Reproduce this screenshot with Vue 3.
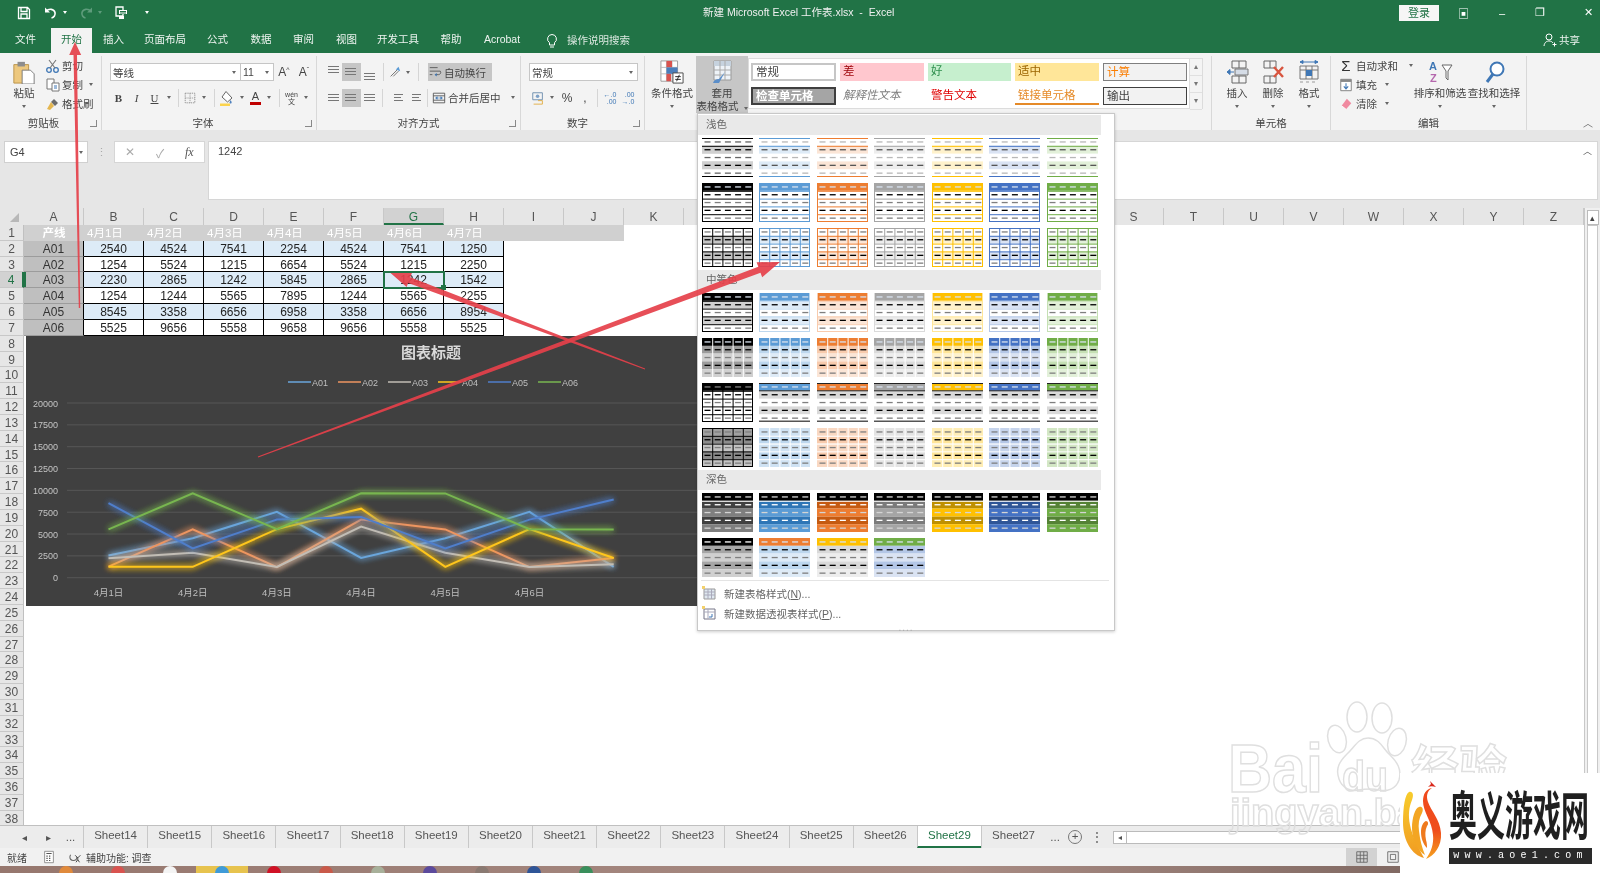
<script setup>
const ic = {
  save: '<path d="M2.5 2.5h9l2 2v9h-11z M5 2.5v4h6v-4 M5 13.5v-4.500h6v4.500" fill="none" stroke="#fff" stroke-width="1.300"/>',
  undo: '<path d="M3 6.500c3-3.500 8-2.500 9 1 .6 2.500-1 5-3.500 5.500" fill="none" stroke="#fff" stroke-width="1.600"/><path d="M2 2.500v5h5z" fill="#fff"/>',
  redo: '<path d="M13 6.500c-3-3.500-8-2.500-9 1-.6 2.500 1 5 3.500 5.500" fill="none" stroke="#5f9c7c" stroke-width="1.600"/><path d="M14 2.500v5h-5z" fill="#5f9c7c"/>',
  touch: '<path d="M3 2h7v9H3z" fill="none" stroke="#fff" stroke-width="1.300"/><path d="M6 5h8v4H6zM6 11h5v3H6z" fill="#fff"/><path d="M7 6.500h6M7 8h6" stroke="#217346"/>',
  bulb: '<path d="M8 1.500a4.500 4.500 0 0 0-2.500 8.200V12h5V9.700A4.500 4.500 0 0 0 8 1.500zM6 14h4" fill="none" stroke="#fff" stroke-width="1"/>',
  user: '<circle cx="7" cy="5" r="3" fill="none" stroke="#fff"/><path d="M2 14c.5-4 3-5 5-5s3 .7 4 2M12.500 10.500v4M10.500 12.500h4" fill="none" stroke="#fff"/>',
  paste: '<path d="M2 5h16v20H2z" fill="#edc87e" stroke="#b99146"/><path d="M6 2h8v5H6z" fill="#8d8d8d"/><path d="M11 11h9l4 4v11H11z" fill="#fff" stroke="#777"/>',
  cut: '<circle cx="4" cy="12" r="2.300" fill="none" stroke="#3f77b5" stroke-width="1.300"/><circle cx="11" cy="12" r="2.300" fill="none" stroke="#3f77b5" stroke-width="1.300"/><path d="M5 10 11 2M10 10 4 2" stroke="#777" stroke-width="1.100"/>',
  copy: '<path d="M2 2h7v10H2z" fill="#fff" stroke="#777"/><path d="M7 6h7v8H7z" fill="#fff" stroke="#777"/><path d="M9 9h3M9 11h3" stroke="#3f77b5"/>',
  brush: '<path d="M9 3l4 4-3 3-4-4z" fill="#6b6b6b"/><path d="M6 6l3 4-4 4-3-1z" fill="#e4b64f"/>',
  border: '<path d="M2.500 2.500h11v11h-11z" fill="none" stroke="#888" stroke-dasharray="1.500 1"/><path d="M8 2.500v11M2.500 8h11" stroke="#999" stroke-dasharray="1.500 1"/>',
  fill: '<path d="M7 1.500 13 8l-4.500 4L3 7z" fill="#fff" stroke="#666"/><path d="M11.500 10c1 1.500 1.500 2 1 3s-2 .6-2-.5z" fill="#4f81bd"/><path d="M1 13.500h10V16H1z" fill="#fbd34d"/>',
  orient: '<path d="M3 13 12 4M6 13 12 7" stroke="#666"/><path d="M12 2l2 5-5-2z" fill="#5b9bd5"/>',
  wrap: '<path d="M2 3h9M2 7h12c1.500 1.500 0 4-2 4H8M2 11h3" fill="none" stroke="#555"/><path d="M10 9l-2.500 2 2.500 2z" fill="#3f77b5"/>',
  merge: '<path d="M1.500 2.500h13v11h-13zM1.500 5.500h13M1.500 10.500h13" fill="none" stroke="#555"/><path d="M5 8h6M4 8l2-1.500v3zM12 8l-2-1.500v3z" fill="#3f77b5" stroke="#3f77b5" stroke-width=".6"/>',
  acct: '<path d="M2 2h11v8H2z" fill="none" stroke="#6688aa"/><circle cx="7.500" cy="6" r="2" fill="#7ca0c7"/><path d="M8 11h5v4H3" fill="none" stroke="#e0a93a"/>',
  cond: '<path d="M1 1h18v22H1z" fill="#fff" stroke="#999"/><path d="M1 8h18M1 15h18M7 1v22M13 1v22" stroke="#bbb"/><path d="M7 1h6v7H7z" fill="#d9534f"/><path d="M7 8h12v7H7z" fill="#4a7ebb"/><path d="M7 15h5v8H7z" fill="#d9534f"/><path d="M14 14h11v11H14z" fill="#fff" stroke="#444"/><path d="M16.500 18h6M16.500 21h6M21 16l-3 7" stroke="#222"/>',
  table: '<path d="M4 1h17v19H4z" fill="#eef3f8" stroke="#999"/><path d="M4 1h17v5H4z" fill="#c6d2de"/><path d="M4 10h17M4 15h17M10 1v19M15 1v19" stroke="#aaa"/><path d="M15 12 9 23 3 23c1-3 3-4 6-4z" fill="#5b8ec9"/>',
  insert: '<path d="M7 1h14v7H7zM7 16h14v7H7zM14 1v7M14 16v7" fill="none" stroke="#666"/><path d="M10 9h13v6H10z" fill="#d5dce6" stroke="#777"/><path d="M2 12h7M2 12l3-2.500v5z" stroke="#3f77b5" fill="#3f77b5"/>',
  del: '<path d="M3 1h12v7H3zM3 16h12v7H3zM9 1v7M9 16v7" fill="none" stroke="#666"/><path d="M13 7l9 10M22 7l-9 10" stroke="#d8553f" stroke-width="2.400"/>',
  format: '<path d="M3 6h18v13H3zM9 6v13M15 6v13M3 10h18" fill="none" stroke="#777"/><path d="M9 10h6v6H9z" fill="#3f77b5"/><path d="M3 2h18M3 2l3-1.500v3zM21 2l-3-1.500v3z" stroke="#3f77b5" fill="#3f77b5"/><path d="M3 22h3M9 22h3M15 22h3" stroke="#999"/>',
  fillDown: '<path d="M2 1.500h12v13H2z" fill="#fff" stroke="#777"/><path d="M2 1.500h12v3H2z" fill="#888"/><path d="M8 6v6M5.500 9.500 8 12.500l2.500-3" fill="none" stroke="#3f77b5" stroke-width="1.200"/>',
  clear: '<path d="M9 2l5 5-6 7-5-4z" fill="#f08aa0"/><path d="M3 10l5 4" stroke="#fff"/>',
  sort: '<path d="M14 5h10l-4 6v9l-2-2v-7z" fill="#fff" stroke="#666"/><text x="1" y="10" font-size="11" font-family="Liberation Sans" font-weight="700" fill="#3f77b5">A</text><text x="2" y="22" font-size="11" font-family="Liberation Sans" font-weight="700" fill="#b568ad">Z</text>',
  find: '<circle cx="15" cy="9" r="6.500" fill="#fff" stroke="#3f77b5" stroke-width="2"/><path d="M11 14 5 22" stroke="#3f77b5" stroke-width="3"/>',
  macro: '<path d="M3 1.500h10v13H3z" fill="#fff" stroke="#888"/><path d="M5 4h6M5 7h1.500M8 7h1.500M5 9.500h1.500M8 9.500h1.500M5 12h1.500M8 12h1.500" stroke="#555" stroke-width="1.300"/>',
  access: '<circle cx="5" cy="8" r="4" fill="none" stroke="#666" stroke-width="1.200" stroke-dasharray="15 10"/><path d="M7 6l3 3 3-3M10 9v2l-2 3M10 11l2 3" fill="none" stroke="#333"/>',
  newTable: '<path d="M3 4h11v10H3z" fill="#dfe8f0" stroke="#999"/><path d="M3 7h11M3 10h11M7 4v10M10.500 4v10" stroke="#aab"/><path d="M1 1h3v3H1z" fill="#f3d16c"/>',
  newPivot: '<path d="M3 4h11v10H3z" fill="#fff" stroke="#778"/><path d="M3 7h11M7 4v10" stroke="#aab"/><path d="M11 9v3H8" fill="none" stroke="#3f77b5"/><path d="M1 1h3v3H1z" fill="#f3d16c"/>',
  grid: '<path d="M2 2h12v12H2zM2 6h12M2 10h12M6 2v12M10 2v12" fill="none" stroke="#666"/>',
  page: '<path d="M2 2h12v12H2zM5 5h6v6H5z" fill="none" stroke="#666"/>'
}

const tabs = [
  { t: '文件', w: 51 }, { t: '开始', w: 41, on: true }, { t: '插入', w: 43 }, { t: '页面布局', w: 60 },
  { t: '公式', w: 45 }, { t: '数据', w: 42 }, { t: '审阅', w: 43 }, { t: '视图', w: 43 },
  { t: '开发工具', w: 60 }, { t: '帮助', w: 46 }, { t: 'Acrobat', w: 56 }
]

// gallery thumbnails: five rows with five dashes, drawn in a 51x39 box
const tones = [
  { a: '#000000', t1: '#d9d9d9', t2: '#bfbfbf', m: '#d9d9d9', d1: '#404040', d2: '#7f7f7f' },
  { a: '#5b9bd5', t1: '#deebf7', t2: '#bdd7ee', m: '#cfe2f3', d1: '#2e75b6', d2: '#5b9bd5' },
  { a: '#ed7d31', t1: '#fbe5d6', t2: '#f8cbad', m: '#f9d8c2', d1: '#c55a11', d2: '#ed7d31' },
  { a: '#a5a5a5', t1: '#ededed', t2: '#dbdbdb', m: '#e4e4e4', d1: '#7b7b7b', d2: '#a5a5a5' },
  { a: '#ffc000', t1: '#fff2cc', t2: '#ffe699', m: '#ffeeb5', d1: '#bf9000', d2: '#ffc000' },
  { a: '#4472c4', t1: '#dae3f3', t2: '#b4c7e7', m: '#c6d4ec', d1: '#2f5597', d2: '#4472c4' },
  { a: '#70ad47', t1: '#e2f0d9', t2: '#c5e0b4', m: '#d3e7c5', d1: '#548235', d2: '#70ad47' }
]
const rh = 7.8
function thumb(kind, c, head) {
  const r = []
  const box = (x, y, w, h, fill) => r.push({ x, y, w, h, fill })
  const hl = (y, col, h = 1) => box(0, y, 51, h, col)
  const vl = (x, col, w = 1) => box(x, 0, w, 39, col)
  const black = c.a === '#000000'
  const rowFill = (i, f) => box(0, i * rh, 51, rh, f)
  if (kind === 'l1') {
    rowFill(1, c.t1); rowFill(3, c.t1)
    if (black) { rowFill(1, '#d0d0d0'); rowFill(3, '#d0d0d0') }
    hl(0, c.a); hl(rh, c.a); hl(38, c.a)
  } else if (kind === 'l2') {
    rowFill(0, c.a)
    for (let i = 1; i < 5; i++) hl(i * rh, c.a)
    hl(38, c.a); vl(0, c.a); vl(50, c.a)
  } else if (kind === 'l3') {
    rowFill(1, c.t1); rowFill(3, c.t1)
    if (black) { rowFill(1, '#c4c4c4'); rowFill(3, '#c4c4c4') }
    for (let i = 0; i < 5; i++) hl(i * rh, c.a)
    hl(38, c.a)
    for (let i = 0; i < 5; i++) vl(i * 10.2, c.a)
    vl(50, c.a)
  } else if (kind === 'm1') {
    rowFill(1, black ? '#d0d0d0' : c.t1); rowFill(3, black ? '#d0d0d0' : c.t1)
    rowFill(0, c.a)
    for (let i = 1; i < 5; i++) hl(i * rh, black ? '#000' : c.t2)
    hl(38, black ? '#000' : c.t2); vl(0, black ? '#000' : c.t2); vl(50, black ? '#000' : c.t2)
  } else if (kind === 'm2') {
    rowFill(1, black ? '#9c9c9c' : c.t2); rowFill(2, black ? '#d0d0d0' : c.t1)
    rowFill(3, black ? '#9c9c9c' : c.t2); rowFill(4, black ? '#d0d0d0' : c.t1)
    rowFill(0, c.a)
    for (let i = 1; i < 5; i++) vl(i * 10.2, '#ffffff')
  } else if (kind === 'm3') {
    if (black) {
      rowFill(0, '#000')
      for (let i = 1; i < 5; i++) hl(i * rh, '#000')
      hl(38, '#000')
      for (let i = 0; i < 5; i++) vl(i * 10.2, '#000')
      vl(50, '#000')
    } else {
      rowFill(0, c.a); rowFill(1, '#d9d9d9'); rowFill(3, '#d9d9d9')
      hl(0, '#222'); hl(rh - 0.5, '#222'); hl(37.500, '#555', 1.500)
    }
  } else if (kind === 'm4') {
    for (let i = 0; i < 5; i++) rowFill(i, i % 2 ? c.t2 : c.m)
    if (black) {
      rowFill(1, '#8c8c8c'); rowFill(3, '#8c8c8c')
      rowFill(0, '#a0a0a0'); rowFill(2, '#c4c4c4'); rowFill(4, '#c4c4c4')
      for (let i = 0; i < 5; i++) { hl(i * rh, '#000'); vl(i * 10.2, '#000') }
      hl(38, '#000'); vl(50, '#000')
    } else {
      for (let i = 1; i < 5; i++) { hl(i * rh, '#fff'); vl(i * 10.2, '#fff') }
    }
  } else if (kind === 'd1') {
    rowFill(0, '#000')
    rowFill(1, c.d1); rowFill(3, c.d1)
    rowFill(2, c.d2); rowFill(4, c.d2)
    hl(rh, '#ffffff')
  } else if (kind === 'd2') {
    const band = head.b
    rowFill(0, head.h); rowFill(1, band[0]); rowFill(2, band[1]); rowFill(3, band[0]); rowFill(4, band[1])
  }
  // dashes
  for (let i = 0; i < 5; i++) {
    let col = i % 2 ? '#000000' : '#7f7f7f'
    if (i === 0) col = '#d8e2ee'
    if (kind === 'l1') col = black ? (i % 2 ? '#000000' : '#666666') : (i % 2 ? '#555555' : '#b8b8b8')
    if (kind === 'l3' || kind === 'm4' || (kind === 'm3' && black)) col = i % 2 ? '#000000' : '#7f7f7f'
    if (kind === 'd1') col = i % 2 ? '#ffffff' : '#d4d4d4'
    if (kind === 'd2' && head.h === '#000000' && i === 0) col = '#ffffff'
    for (let j = 0; j < 5; j++) box(2.500 + j * 10.2, i * rh + 3.300, 6, 1.300, col)
  }
  return r
}
const makeRow = (kind) => tones.map(c => thumb(kind, c))
const lightRows = [makeRow('l1'), makeRow('l2'), makeRow('l3')]
const midRows = [makeRow('m1'), makeRow('m2'), makeRow('m3'), makeRow('m4')]
const darkRows = [
  makeRow('d1'),
  [
    { h: '#000000', b: ['#a6a6a6', '#d0d0d0'] },
    { h: '#ed7d31', b: ['#bdd7ee', '#deebf7'] },
    { h: '#ffc000', b: ['#d9d9d9', '#ededed'] },
    { h: '#70ad47', b: ['#b4c7e7', '#dae3f3'] }
  ].map(h => thumb('d2', tones[0], h))
]
const sections = [
  { t: '浅色', rows: lightRows }, { t: '中等色', rows: midRows }, { t: '深色', rows: darkRows }
]

// sheet
const colNames = 'ABCDEFGHIJKLMNOPQRSTUVWXYZ'.split('')
const heads = ['产线', '4月1日', '4月2日', '4月3日', '4月4日', '4月5日', '4月6日', '4月7日', '', '']
const data = [
  ['A01', 2540, 4524, 7541, 2254, 4524, 7541, 1250],
  ['A02', 1254, 5524, 1215, 6654, 5524, 1215, 2250],
  ['A03', 2230, 2865, 1242, 5845, 2865, 1242, 1542],
  ['A04', 1254, 1244, 5565, 7895, 1244, 5565, 2255],
  ['A05', 8545, 3358, 6656, 6958, 3358, 6656, 8954],
  ['A06', 5525, 9656, 5558, 9658, 9656, 5558, 5525]
]
const rowNums = Array.from({ length: 38 }, (_, i) => i + 1)

// chart, in page coordinates
const colours = ['#6aa6dc', '#ee9560', '#c2bdb5', '#ffc61a', '#4f7ecb', '#78b650']
const xAt = i => 108.500 + i * 84.2
const yAt = v => 577.700 - v * 174.700 / 20000
const series = data.map((row, i) => ({
  name: row[0], colour: colours[i],
  points: row.slice(1).map((v, k) => `${xAt(k).toFixed(1)},${yAt(v).toFixed(1)}`).join(' ')
}))
const ticks = [20000, 17500, 15000, 12500, 10000, 7500, 5000, 2500, 0]
const days = ['4月1日', '4月2日', '4月3日', '4月4日', '4月5日', '4月6日']

// red annotation arrows: tapered shaft and a head
function arrow(tx, ty, hx, hy, w0, w1, hl, hw) {
  const len = Math.hypot(hx - tx, hy - ty)
  const ux = (hx - tx) / len, uy = (hy - ty) / len
  const nx = -uy, ny = ux
  const bx = hx - ux * hl, by = hy - uy * hl
  const p = [
    [tx + nx * w0 / 2, ty + ny * w0 / 2], [bx + nx * w1 / 2, by + ny * w1 / 2],
    [bx + nx * hw / 2, by + ny * hw / 2], [hx, hy],
    [bx - nx * hw / 2, by - ny * hw / 2], [bx - nx * w1 / 2, by - ny * w1 / 2],
    [tx - nx * w0 / 2, ty - ny * w0 / 2]
  ]
  return p.map(q => q[0].toFixed(1) + ',' + q[1].toFixed(1)).join(' ')
}
const arrows = [
  arrow(79.500, 308, 75, 42, 1.500, 3.500, 13, 12),
  arrow(645, 369, 390.500, 273, 0.800, 6, 20, 15),
  arrow(258, 457, 780, 262, 1, 6.500, 22, 16)
]

const sheetTabs = ['14', '15', '16', '17', '18', '19', '20', '21', '22', '23', '24', '25', '26', '29', '27']
const taskItems = ['#e08a3c', '#d9534f', '#f4f4f4', '#3f9bd8', '#d01226', '#c95a4a', '#a8b09a', '#5c4a9c', '#8a7a72', '#2f5597', '#3a8f5c']
</script>

<template>
  <div class="app">
    <!-- title bar -->
    <header class="titlebar">
      <div class="qat">
        <svg class="i16 q1" viewBox="0 0 16 16" v-html="ic.save"></svg>
        <svg class="i16 q2" viewBox="0 0 16 16" v-html="ic.undo"></svg><i class="caret w"></i>
        <svg class="i16 q3" viewBox="0 0 16 16" v-html="ic.redo"></svg><i class="caret dim"></i>
        <svg class="i16 q4" viewBox="0 0 16 16" v-html="ic.touch"></svg><i class="caret w q5"></i>
      </div>
      <div class="doc">新建 Microsoft Excel 工作表.xlsx&nbsp; - &nbsp;Excel</div>
      <div class="win">
        <span class="login">登录</span>
        <span class="w1">▣</span><span class="w2">–</span><span class="w3">❐</span><span class="w4">✕</span>
      </div>
    </header>
    <nav class="tabs">
      <span v-for="t in tabs" :key="t.t" class="tab" :class="{ on: t.on }" :style="{ width: t.w + 'px' }">{{ t.t }}</span>
      <svg class="i16 bulb" viewBox="0 0 16 16" v-html="ic.bulb"></svg>
      <span class="tell">操作说明搜索</span>
      <span class="share"><svg class="i16" viewBox="0 0 16 16" v-html="ic.user"></svg>共享</span>
    </nav>

    <!-- ribbon -->
    <section class="ribbon">
      <div class="group g-clip">
        <div class="body">
          <div class="big paste">
            <svg class="i24" viewBox="0 0 26 26" v-html="ic.paste"></svg><span>粘贴</span><i class="caret"></i>
          </div>
          <div class="stack">
            <div class="line"><svg class="i16" viewBox="0 0 16 16" v-html="ic.cut"></svg>剪切</div>
            <div class="line"><svg class="i16" viewBox="0 0 16 16" v-html="ic.copy"></svg>复制<i class="caret ml"></i></div>
            <div class="line"><svg class="i16" viewBox="0 0 16 16" v-html="ic.brush"></svg>格式刷</div>
          </div>
        </div>
        <div class="label">剪贴板</div><i class="launch"></i>
      </div>

      <div class="group g-font">
        <div class="body col">
          <div class="row r1">
            <div class="select s-font">等线<i class="caret"></i></div>
            <div class="select s-size">11<i class="caret"></i></div>
            <span class="grow">A<sup>^</sup></span><span class="shrink">A<sup>ˇ</sup></span>
          </div>
          <div class="row r2 font-tools">
            <b>B</b><em>I</em><u>U</u><i class="caret"></i><s class="sep"></s>
            <svg class="i14" viewBox="0 0 16 16" v-html="ic.border"></svg><i class="caret"></i><s class="sep"></s>
            <svg class="i16" viewBox="0 0 16 16" v-html="ic.fill"></svg><i class="caret"></i>
            <span class="color-a">A</span><i class="caret"></i><s class="sep"></s>
            <span class="wen">wén<br>文</span><i class="caret"></i>
          </div>
        </div>
        <div class="label">字体</div><i class="launch"></i>
      </div>

      <div class="group g-align">
        <div class="body col">
          <div class="row r1 align-top">
            <span class="lines top"></span><span class="lines on"></span><span class="lines bot"></span><s class="sep"></s>
            <svg class="i14" viewBox="0 0 16 16" v-html="ic.orient"></svg><i class="caret"></i><s class="sep"></s>
            <span class="btn-on"><svg class="i14" viewBox="0 0 16 16" v-html="ic.wrap"></svg>自动换行</span>
          </div>
          <div class="row r2 align-bot">
            <span class="lines l"></span><span class="lines on c"></span><span class="lines r"></span><s class="sep"></s>
            <span class="lines ind"></span><span class="lines ind"></span><s class="sep"></s>
            <span class="merge"><svg class="i14" viewBox="0 0 16 16" v-html="ic.merge"></svg>合并后居中<i class="caret ml2"></i></span>
          </div>
        </div>
        <div class="label">对齐方式</div><i class="launch"></i>
      </div>

      <div class="group g-num">
        <div class="body col">
          <div class="row r1"><div class="select s-num">常规<i class="caret"></i></div></div>
          <div class="row r2 num-tools">
            <svg class="i14" viewBox="0 0 16 16" v-html="ic.acct"></svg><i class="caret"></i><span>%</span><span>,</span><s class="sep"></s>
            <span class="dec">←.0<br>.00</span><span class="dec">.00<br>→.0</span>
          </div>
        </div>
        <div class="label">数字</div><i class="launch"></i>
      </div>

      <div class="group g-style">
        <div class="body">
          <div class="big b48">
            <svg class="i24" viewBox="0 0 26 26" v-html="ic.cond"></svg><span>条件格式</span><i class="caret"></i>
          </div>
          <div class="big b52 hot">
            <svg class="i24" viewBox="0 0 24 24" v-html="ic.table"></svg><span>套用</span><span>表格格式<i class="caret ml"></i></span>
          </div>
          <div class="gallery">
            <div class="styles">
              <span class="st normal">常规</span><span class="st bad">差</span><span class="st good">好</span><span class="st neutral">适中</span><span class="st calc">计算</span>
              <span class="st check">检查单元格</span><span class="st note">解释性文本</span><span class="st warn">警告文本</span><span class="st link">链接单元格</span><span class="st output">输出</span>
            </div>
            <div class="spin"><i>▴</i><i>▾</i><i>▾</i></div>
          </div>
        </div>
      </div>

      <div class="group g-cells">
        <div class="body">
          <div class="big b36"><svg class="i24" viewBox="0 0 24 24" v-html="ic.insert"></svg><span>插入</span><i class="caret"></i></div>
          <div class="big b36"><svg class="i24" viewBox="0 0 24 24" v-html="ic.del"></svg><span>删除</span><i class="caret"></i></div>
          <div class="big b36"><svg class="i24" viewBox="0 0 24 24" v-html="ic.format"></svg><span>格式</span><i class="caret"></i></div>
        </div>
        <div class="label">单元格</div>
      </div>

      <div class="group g-edit">
        <div class="body">
          <div class="stack edit">
            <div class="line"><span class="sigma">Σ</span>自动求和<i class="caret ml2"></i></div>
            <div class="line"><svg class="i14" viewBox="0 0 16 16" v-html="ic.fillDown"></svg>填充<i class="caret ml"></i></div>
            <div class="line"><svg class="i14" viewBox="0 0 16 16" v-html="ic.clear"></svg>清除<i class="caret ml"></i></div>
          </div>
          <div class="big b54"><svg class="i24" viewBox="0 0 24 24" v-html="ic.sort"></svg><span>排序和筛选</span><i class="caret"></i></div>
          <div class="big b54"><svg class="i24" viewBox="0 0 24 24" v-html="ic.find"></svg><span>查找和选择</span><i class="caret"></i></div>
        </div>
        <div class="label">编辑</div>
      </div>
      <span class="collapse">︿</span>
    </section>

    <!-- formula bar -->
    <section class="formula">
      <div class="namebox">G4<i class="caret"></i></div>
      <span class="dots">⋮</span>
      <div class="fx-box"><span>✕</span><span>✓</span><em>fx</em></div>
      <div class="input">1242<span class="up">︿</span></div>
    </section>

    <!-- sheet -->
    <section class="sheet">
      <div class="grid">
        <div class="cols">
          <div class="corner"><i></i></div>
          <span v-for="c in colNames" :key="c" class="colh" :class="{ on: c === 'G' }">{{ c }}</span>
        </div>
        <div v-for="n in rowNums" :key="n" class="rw">
          <span class="rowh" :class="{ on: n === 4 }">{{ n }}</span>
          <template v-if="n === 1">
            <span v-for="(h, i) in heads" :key="i" class="cell head" :class="{ day: i > 0 }">{{ h }}</span>
          </template>
          <template v-else-if="n <= 7">
            <span class="cell key" :class="{ act: n === 4 }">{{ data[n - 2][0] }}</span>
            <span v-for="(v, i) in data[n - 2].slice(1)" :key="i" class="cell val"
              :class="{ band: n % 2 === 0, sel: n === 4 && i === 5 }">{{ v }}</span>
          </template>
        </div>
      </div>
      <div class="vscroll"><span class="vup">▴</span><div class="vtrack"></div></div>
    </section>

    <!-- sheet tabs and status -->
    <section class="strip">
      <span class="nav n1">◂</span><span class="nav n2">▸</span><span class="nav n3">...</span>
      <span v-for="s in sheetTabs" :key="s" class="stab" :class="{ on: s === '29' }">Sheet{{ s }}</span>
      <span class="nav n4">...</span>
      <span class="plus">+</span>
      <span class="nav n5">⋮</span>
      <div class="hscroll"><span>◂</span></div>
    </section>
    <footer class="status">
      <span class="ready">就绪</span>
      <svg class="i14 st-macro" viewBox="0 0 16 16" v-html="ic.macro"></svg>
      <svg class="i14 st-acc" viewBox="0 0 16 16" v-html="ic.access"></svg>
      <span>辅助功能: 调查</span>
      <span class="views">
        <span class="view on"><svg class="i14" viewBox="0 0 16 16" v-html="ic.grid"></svg></span>
        <span class="view"><svg class="i14" viewBox="0 0 16 16" v-html="ic.page"></svg></span>
      </span>
    </footer>
    <div class="taskbar">
      <span v-for="(c, i) in taskItems" :key="i" class="task" :class="{ on: i === 3 }"><i :style="{ background: c }"></i></span>
    </div>

    <!-- chart floats over the cells -->
    <svg class="chart" viewBox="26 336 1000 270">
      <defs>
        <filter id="glow" x="-10%" y="-30%" width="120%" height="160%">
          <feGaussianBlur stdDeviation="3" result="b" />
          <feMerge><feMergeNode in="b" /><feMergeNode in="b" /><feMergeNode in="SourceGraphic" /></feMerge>
        </filter>
      </defs>
      <rect x="26" y="336" width="1000" height="270" fill="#404040" />
      <text x="431" y="358" class="c-title">图表标题</text>
      <g v-for="(s, i) in series" :key="s.name">
        <line :x1="288 + i * 50" :x2="311 + i * 50" y1="382" y2="382" :stroke="s.colour" stroke-width="1.500" />
        <text :x="312 + i * 50" y="385.500" class="c-leg">{{ s.name }}</text>
      </g>
      <g v-for="t in ticks" :key="t">
        <line x1="67" x2="1026" :y1="yAt(t)" :y2="yAt(t)" stroke="#565656" />
        <text x="58" :y="yAt(t) + 3.500" class="c-tick">{{ t }}</text>
      </g>
      <text v-for="(d, i) in days" :key="d" :x="xAt(i)" y="596" class="c-day">{{ d }}</text>
      <polyline v-for="s in series" :key="s.name" :points="s.points" fill="none" :stroke="s.colour" stroke-width="2" filter="url(#glow)" />
    </svg>

    <!-- table style menu -->
    <div class="menu">
      <template v-for="s in sections" :key="s.t">
        <div class="m-head">{{ s.t }}</div>
        <div class="m-grid">
          <template v-for="(row, ri) in s.rows" :key="ri">
            <svg v-for="(th, ti) in row" :key="ti" class="thumb" viewBox="0 0 51 39">
              <rect v-for="(q, qi) in th" :key="qi" :x="q.x" :y="q.y" :width="q.w" :height="q.h" :fill="q.fill" />
            </svg>
          </template>
        </div>
      </template>
      <div class="m-sep"></div>
      <div class="m-item"><svg class="i16" viewBox="0 0 16 16" v-html="ic.newTable"></svg><span>新建表格样式(<u>N</u>)...</span></div>
      <div class="m-item"><svg class="i16" viewBox="0 0 16 16" v-html="ic.newPivot"></svg><span>新建数据透视表样式(<u>P</u>)...</span></div>
      <div class="m-grip">....</div>
    </div>

    <!-- annotation arrows -->
    <svg class="overlay" viewBox="0 0 1600 873">
      <polygon v-for="(p, i) in arrows" :key="i" :points="p" fill="#e5404a" fill-opacity=".92" />
    </svg>

    <!-- baidu watermark and site logo -->
    <svg class="overlay" viewBox="0 0 1600 873">
      <g class="wm">
        <ellipse cx="1357" cy="717" rx="10" ry="15" />
        <ellipse cx="1382" cy="718" rx="10" ry="15" />
        <ellipse cx="1337" cy="739" rx="9" ry="14" transform="rotate(-15 1337 739)" />
        <ellipse cx="1397" cy="742" rx="9" ry="14" transform="rotate(15 1397 742)" />
        <path d="M1368 738c-10 0-14 10-21 16-7 7-12 14-8 25 3 9 12 13 19 11 7-1 14-2 21 0 8 2 17-1 20-10 3-11-2-18-9-25-7-6-10-17-22-17z" />
        <text x="1228" y="792" font-size="68" textLength="95" lengthAdjust="spacingAndGlyphs">Bai</text>
        <text x="1342" y="791" font-size="42" textLength="46" lengthAdjust="spacingAndGlyphs">du</text>
        <text x="1411" y="785" font-size="48" class="wm-cn">经验</text>
        <text x="1230" y="826" font-size="38">jingyan.bai</text>
      </g>
    </svg>
    <div class="site">
      <svg class="site-logo" viewBox="0 0 42 82">
        <defs>
          <linearGradient id="fire" x1="0" y1="0" x2="0" y2="1">
            <stop offset="0" stop-color="#f04a1d" /><stop offset=".6" stop-color="#ef4d1c" /><stop offset="1" stop-color="#f5a21f" />
          </linearGradient>
          <linearGradient id="gold" x1="0" y1="0" x2="0" y2="1">
            <stop offset="0" stop-color="#f7cc2c" /><stop offset="1" stop-color="#f19a22" />
          </linearGradient>
        </defs>
        <path d="M26 8c2-1 5-1 8 0l-3-3-3-3 1 3z" fill="#d9281c" />
        <path d="M30 9c-5 3-6 8-4 14 3 9 12 17 13 31 1 13-7 23-15 26 5-7 8-15 7-24C30 42 21 33 21 22c0-7 3-12 9-13z" fill="url(#fire)" />
        <path d="M7 13c4-1 5 3 3 8-3 7-4 15-2 25 2 10 7 20 14 33C10 76 1 62 1 43 1 28 3 15 7 13z" fill="url(#gold)" />
        <path d="M17 28c3-1 5 2 3 6-3 5-4 11-3 18 1 9 3 17 6 24-7-4-13-15-13-27 0-10 3-20 7-21z" fill="#f3a523" />
        <path d="M24 42c2 0 3 3 1 5-2 4-2 9-1 14 1 3 1 6 1 8-4-4-6-10-6-16 0-5 2-10 5-11z" fill="#ef7a1e" />
      </svg>
      <div class="site-text">
        <div class="site-name">奥义游戏网</div>
        <div class="site-url">www.aoe1.com</div>
      </div>
    </div>
  </div>
</template>

<style scoped>
.app {
  width: 1600px;
  height: 873px;
  position: relative;
  overflow: hidden;
  display: flex;
  flex-direction: column;
  background: #fff;
  color: #444;
  font: 10.5px 'Liberation Sans', 'Noto Sans CJK SC', sans-serif;
  filter: blur(.45px);
}
.i14 { width: 14px; height: 14px; flex: none; }
.i16 { width: 16px; height: 16px; flex: none; }
.i24 { width: 26px; height: 24px; flex: none; }
i { font-style: normal; }
.caret {
  display: inline-block;
  width: 0;
  height: 0;
  flex: none;
  border: 2px solid transparent;
  border-top: 3px solid #666;
  border-bottom: 0;
}
.caret.w { border-top-color: #fff; }
.caret.dim { border-top-color: #5f9c7c; }
.caret.ml { margin-left: 5px; }
.caret.ml2 { margin-left: 8px; }

/* title */
.titlebar {
  height: 28px;
  flex: none;
  box-sizing: border-box;
  padding-bottom: 3px;
  background: #217346;
  color: #fff;
  display: flex;
  align-items: center;
  position: relative;
}
.qat { display: flex; align-items: center; padding-left: 16px; gap: 4px; width: 703px; box-sizing: border-box; }
.q2 { margin-left: 7px; }
.q3 { margin-left: 7px; }
.q4 { margin-left: 7px; }
.q5 { margin-left: 12px; }
.doc { font-size: 10.5px; color: #f0f0f0; width: 696px; margin-top: -2px; }
.win { display: flex; align-items: center; position: relative; flex: 1; font-size: 11px; }
.login {
  width: 40px;
  height: 16px;
  background: #f6f6f6;
  color: #217346;
  text-align: center;
  line-height: 16px;
}
.w1 { margin-left: 19px; }
.w2 { margin-left: 30px; }
.w3 { margin-left: 30px; }
.w4 { margin-left: 39px; }
.tabs {
  height: 25px;
  flex: none;
  background: #217346;
  color: #eef4f0;
  display: flex;
  align-items: center;
  font-size: 10.5px;
}
.tab { height: 25px; line-height: 23px; text-align: center; }
.tab.on { background: #f3f3f3; color: #217346; }
.bulb { margin-left: 14px; }
.tell { margin-left: 7px; color: #dbe8e0; margin-top: -2px; }
.share { margin-left: auto; margin-right: 20px; display: flex; align-items: center; gap: 1px; margin-top: -2px; }

/* ribbon */
.ribbon {
  height: 77px;
  flex: none;
  background: #f3f3f3;
  display: flex;
  position: relative;
}
.group { position: relative; border-right: 1px solid #d8d8d8; height: 74px; margin-top: 3px; box-sizing: border-box; }
.g-clip { width: 102px; }
.g-font { width: 215px; padding-left: 8px; }
.g-align { width: 204px; padding-left: 8px; }
.g-num { width: 124px; padding-left: 8px; }
.g-style { width: 567px; padding-left: 3px; }
.g-cells { width: 119px; padding-left: 7px; }
.g-edit { width: 196px; padding-left: 8px; }
.body { height: 61px; display: flex; box-sizing: border-box; }
.body.col { flex-direction: column; }
.label { text-align: center; line-height: 13px; height: 13px; margin-left: -8px; box-sizing: border-box; }
.g-clip .label { margin-left: -14px; }
.g-cells .label { margin-left: -7px; }
.g-font .label { padding-right: 12px; }
.g-num .label { padding-right: 10px; }
.launch {
  position: absolute;
  right: 4px;
  bottom: 3px;
  width: 6px;
  height: 6px;
  border-left: 1px solid #888;
  border-bottom: 1px solid #888;
  transform: scaleX(-1);
}
.big { display: flex; flex-direction: column; align-items: center; padding-top: 4px; box-sizing: border-box; line-height: 13px; }
.big .i24 { margin-bottom: 3px; }
.big > .caret { margin-top: 5px; }
.paste { width: 32px; margin-left: 8px; }
.b48 { width: 48px; }
.b52 { width: 52px; }
.b36 { width: 36px; }
.b54 { width: 54px; }
.hot { background: #c6c6c6; height: 57px; }
.stack { display: flex; flex-direction: column; padding-left: 5px; }
.line { height: 19px; display: flex; align-items: center; gap: 1px; white-space: nowrap; }
.edit { width: 74px; padding-left: 0; flex: none; }
.edit .line { gap: 3px; }
.sigma { font-size: 15px; width: 14px; color: #333; text-align: center; line-height: 14px; }
.row { display: flex; align-items: center; }
.r1 { height: 18px; margin-top: 7px; }
.r2 { height: 19px; margin-top: 7px; }
.select {
  height: 18px;
  box-sizing: border-box;
  background: #fff;
  border: 1px solid #c6c6c6;
  display: flex;
  align-items: center;
  justify-content: space-between;
  padding: 0 4px 0 2px;
}
.s-font { width: 131px; }
.s-size { width: 33px; border-left: 0; }
.s-num { width: 109px; }
.grow, .shrink { font-size: 12px; width: 20px; text-align: center; }
sup { font-size: 7px; vertical-align: top; line-height: 10px; }
.sep { width: 1px; height: 18px; background: #d5d5d5; flex: none; }
.font-tools {
  display: grid;
  grid-template-columns: 17px 19px 17px 11px 8px 16px 12px 8px 17px 13px 15px 12px 8px 17px 12px;
  justify-items: center;
  font-family: 'Liberation Serif', serif;
  font-size: 11px;
}
.color-a { border-bottom: 3px solid #c00000; line-height: 11px; padding: 0 2px; font-family: 'Liberation Sans', sans-serif; }
.wen { font-size: 7px; line-height: 7px; text-align: center; font-family: 'Liberation Sans', 'Noto Sans CJK SC', sans-serif; }
.lines {
  width: 17px;
  height: 18px;
  flex: none;
  background:
    linear-gradient(#777, #777) 3px 5px / 11px 1px no-repeat,
    linear-gradient(#777, #777) 3px 8px / 11px 1px no-repeat,
    linear-gradient(#777, #777) 3px 11px / 11px 1px no-repeat;
}
.lines.on { width: 19px; background-color: #c6c6c6; }
.lines.top { background-position: 3px 3px, 3px 6px, 3px 9px; }
.lines.bot { width: 18px; background-position: 3px 10px, 3px 13px, 3px 16px; }
.lines.ind { width: 18px; background-size: 9px 1px, 7px 1px, 9px 1px; background-position: 7px 5px, 7px 8px, 7px 11px; }
.align-top, .align-bot { display: flex; }
.align-top .sep, .align-bot .sep { margin: 0 4px; }
.align-top .caret { margin: 0 4px; }
.btn-on {
  width: 64px;
  height: 18px;
  margin-left: 5px;
  background: #c6c6c6;
  display: flex;
  align-items: center;
  gap: 2px;
  white-space: nowrap;
}
.merge { display: flex; align-items: center; gap: 2px; white-space: nowrap; }
.num-tools {
  display: grid;
  grid-template-columns: 18px 9px 22px 14px 10px 16px 20px;
  justify-items: center;
  font-size: 12px;
}
.dec { font-size: 7px; line-height: 7px; text-align: right; color: #3f77b5; }
.gallery {
  margin-top: 2px;
  height: 51px;
  display: flex;
  background: #fff;
  border: 1px solid #dcdcdc;
  box-sizing: border-box;
  width: 455px;
}
.styles {
  display: grid;
  grid-template-columns: 85px 84px 83px 84px 84px;
  grid-auto-rows: 18px;
  column-gap: 4px;
  row-gap: 6px;
  padding: 4px 2px;
}
.st { font-size: 11.5px; line-height: 15px; padding-left: 3px; box-sizing: border-box; height: 18px; white-space: nowrap; font-family: 'Noto Sans CJK SC', sans-serif; }
.normal { border: 2px solid #c6c6c6; color: #444; background: #fff; line-height: 13px; }
.bad { background: #ffc7ce; color: #9c0006; }
.good { background: #c6efce; color: #2f8f4e; }
.neutral { background: #ffe699; color: #9c6500; }
.calc { background: #f2f2f2; color: #fa7d00; border: 1px solid #7f7f7f; }
.check { background: #a5a5a5; color: #fff; border: 2px solid #3f3f3f; font-weight: 700; line-height: 13px; }
.note { color: #7f7f7f; font-style: italic; }
.warn { color: #e00000; }
.link { color: #e58a28; border-bottom: 2px solid #e58a28; }
.output { background: #f2f2f2; color: #3f3f3f; border: 1px solid #3f3f3f; }
.spin { width: 13px; margin-left: auto; display: flex; flex-direction: column; border-left: 1px solid #dcdcdc; }
.spin i { flex: 1; border-bottom: 1px solid #e0e0e0; background: #f4f4f4; font-size: 8px; line-height: 16px; text-align: center; color: #777; }
.collapse { position: absolute; right: 7px; bottom: 0; color: #666; font-size: 10px; }

/* formula */
.formula {
  height: 78px;
  flex: none;
  background: #e6e6e6;
  padding: 11px 0 0 4px;
  box-sizing: border-box;
  display: flex;
  align-items: flex-start;
}
.namebox {
  width: 84px;
  height: 22px;
  background: #fff;
  border: 1px solid #d0d0d0;
  box-sizing: border-box;
  display: flex;
  align-items: center;
  justify-content: space-between;
  padding: 0 4px 0 5px;
  font-size: 11px;
}
.dots { width: 26px; text-align: center; color: #aaa; line-height: 22px; }
.fx-box {
  width: 91px;
  height: 22px;
  background: #fff;
  border: 1px solid #d6d6d6;
  box-sizing: border-box;
  display: flex;
  align-items: center;
  justify-content: space-around;
  color: #aaa;
  font-size: 12px;
}
.fx-box em { color: #555; font-family: 'Liberation Serif', serif; }
.input {
  margin-left: 3px;
  width: 1390px;
  height: 59px;
  background: #fff;
  border: 1px solid #d6d6d6;
  box-sizing: border-box;
  padding: 3px 0 0 9px;
  font-size: 11px;
  position: relative;
}
.up { position: absolute; right: 5px; top: 2px; font-size: 9px; color: #555; }

/* sheet */
.sheet { flex: 1; display: flex; min-height: 0; overflow: hidden; }
.grid { width: 1584px; flex: none; overflow: hidden; }
.cols { height: 17px; display: flex; background: #e6e6e6; }
.corner { width: 24px; height: 17px; flex: none; position: relative; }
.corner i {
  position: absolute;
  right: 5px;
  bottom: 3px;
  border-left: 9px solid transparent;
  border-bottom: 9px solid #b8b8b8;
}
.colh, .rowh { color: #555; font-size: 12px; text-align: center; box-sizing: border-box; }
.colh { width: 60px; flex: none; line-height: 18px; border-right: 1px solid #c8c8c8; }
.colh.on { background: #d2d2d2; border-bottom: 2px solid #217346; color: #217346; }
.rw { height: 15.83px; display: flex; }
.rowh {
  width: 24px;
  flex: none;
  line-height: 17px;
  background: #e6e6e6;
  border-bottom: 1px solid #c8c8c8;
  border-right: 1px solid #c0c0c0;
}
.rowh.on { background: #d2d2d2; color: #217346; border-right: 2px solid #217346; }
.cell {
  width: 60px;
  flex: none;
  box-sizing: border-box;
  text-align: center;
  line-height: 17px;
  font-size: 12px;
  color: #222;
}
.head { background: #d0d0d0; color: #fff; font-weight: 700; font-size: 11.5px; }
.head.day { text-align: left; padding-left: 3px; font-weight: 400; }
.key { background: #bfbfbf; color: #333; border-bottom: 1px solid #9c9c9c; border-right: 1px solid #000; }
.key.act { box-shadow: inset 2px 0 0 #217346; }
.val { border-right: 1px solid #000; border-bottom: 1px solid #000; }
.band { background: #ddebf7; }
.sel { position: relative; outline: 2px solid #217346; outline-offset: -1px; }
.sel::after {
  content: '';
  position: absolute;
  right: -3px;
  bottom: -3px;
  width: 5px;
  height: 5px;
  background: #217346;
}
.vscroll { flex: 1; background: #f0f0f0; border-left: 1px solid #c8c8c8; display: flex; flex-direction: column; align-items: center; }
.vup { margin-top: 2px; width: 12px; height: 15px; background: #fff; border: 1px solid #bbb; text-align: center; font-size: 9px; line-height: 15px; box-sizing: border-box; }
.vtrack { width: 11px; flex: 1; background: #fff; border: 1px solid #c8c8c8; box-sizing: border-box; }

/* sheet tabs */
.strip {
  height: 23px;
  flex: none;
  background: #ececec;
  border-top: 1px solid #c0c0c0;
  box-sizing: border-box;
  display: flex;
  align-items: center;
  font-size: 11.5px;
  color: #555;
}
.nav { text-align: center; flex: none; }
.n1 { width: 24px; margin-left: 12px; font-size: 10px; }
.n2 { width: 24px; font-size: 10px; }
.n3 { width: 23px; padding-right: 2px; box-sizing: border-box; }
.stab {
  width: 64.15px;
  flex: none;
  box-sizing: border-box;
  text-align: center;
  line-height: 19px;
  height: 22px;
  border-left: 1px solid #c8c8c8;
}
.stab.on { background: #fff; color: #217346; border-bottom: 2px solid #217346; }
.n4 { width: 20px; }
.plus {
  width: 14px;
  height: 14px;
  flex: none;
  box-sizing: border-box;
  margin-left: 3px;
  border: 1px solid #777;
  border-radius: 50%;
  text-align: center;
  line-height: 11px;
}
.n5 { width: 18px; margin-left: 6px; }
.hscroll {
  margin-left: 7px;
  flex: 1;
  margin-right: 17px;
  height: 13px;
  background: #fff;
  border: 1px solid #bbb;
  box-sizing: border-box;
  font-size: 8px;
  line-height: 11px;
}
.hscroll span { display: inline-block; width: 12px; text-align: center; border-right: 1px solid #bbb; }

/* status */
.status {
  height: 18px;
  flex: none;
  background: #f1f1f1;
  display: flex;
  align-items: center;
  font-size: 10px;
  padding-left: 7px;
  color: #444;
}
.ready { width: 35px; }
.st-macro { margin-right: 12px; }
.st-acc { margin: 0 3px 0 1px; }
.views { margin-left: auto; margin-right: 192px; display: flex; }
.view { width: 31px; height: 18px; display: flex; align-items: center; justify-content: center; }
.view.on { background: #d2d2d2; }
.taskbar {
  height: 7px;
  flex: none;
  background: linear-gradient(90deg, #96776e, #a98c84 60%, #6f5a54);
  display: flex;
  padding-left: 40px;
  overflow: hidden;
}
.task { width: 52px; flex: none; display: flex; justify-content: center; }
.task.on { background: #e7c34e; }
.task i { width: 14px; height: 14px; border-radius: 50% 50% 2px 2px; }

/* chart */
.chart { position: absolute; left: 26px; top: 336px; width: 1000px; height: 270px; }
.c-title { font: 700 15px 'Noto Sans CJK SC', sans-serif; fill: #d9d9d9; text-anchor: middle; }
.c-leg { font: 9px 'Liberation Sans', sans-serif; fill: #bfbfbf; }
.c-tick { font: 9px 'Liberation Sans', sans-serif; fill: #c4c4c4; text-anchor: end; }
.c-day { font: 9.5px 'Liberation Sans', 'Noto Sans CJK SC', sans-serif; fill: #bfbfbf; text-anchor: middle; }

/* menu */
.menu {
  position: absolute;
  left: 697px;
  top: 113px;
  width: 418px;
  height: 518px;
  box-sizing: border-box;
  background: #fff;
  border: 1px solid #c8c8c8;
  box-shadow: 0 1px 3px rgba(0, 0, 0, .2);
  padding-top: 1px;
}
.m-head {
  width: 403px;
  height: 20px;
  background: #e9e9e9;
  line-height: 19px;
  padding-left: 8px;
  box-sizing: border-box;
  color: #666;
  font-size: 10.5px;
}
.m-grid {
  display: grid;
  grid-template-columns: repeat(7, 51px);
  grid-auto-rows: 39px;
  column-gap: 6.500px;
  row-gap: 6px;
  padding: 3px 0 3px 3.500px;
}
.thumb { width: 51px; height: 39px; display: block; }
.m-sep { height: 1px; background: #e4e4e4; margin: 0 5px 2px 3px; }
.m-item {
  height: 20px;
  padding-left: 3px;
  display: flex;
  align-items: center;
  gap: 7px;
  color: #666;
  white-space: nowrap;
}
.m-grip { text-align: center; color: #aaa; font-size: 10px; line-height: 7px; margin-top: 1px; letter-spacing: 1px; }

.overlay { position: absolute; left: 0; top: 0; width: 1600px; height: 873px; pointer-events: none; }
.wm { fill: none; stroke: #dedede; stroke-width: 1.500; font-family: 'Liberation Sans', sans-serif; font-weight: 700; opacity: .95; }
.wm-cn { font-family: 'Noto Sans CJK SC', sans-serif; }

.site {
  position: absolute;
  left: 1400px;
  top: 773px;
  width: 200px;
  height: 100px;
  background: #fff;
  display: flex;
  padding: 6px 0 0 2px;
  box-sizing: border-box;
}
.site-logo { width: 42px; height: 82px; flex: none; }
.site-text { margin-left: 5px; }
.site-name {
  font: 700 28px/34px 'Noto Sans CJK SC', sans-serif;
  color: #1f1f1f;
  margin-top: 2px;
  transform: scaleY(1.85);
  transform-origin: top;
  width: 142px;
  white-space: nowrap;
}
.site-url {
  margin-top: 33px;
  width: 143px;
  height: 16px;
  background: #2a2a2a;
  color: #fff;
  font: 10px/16px 'Liberation Mono', monospace;
  text-align: center;
  letter-spacing: 5.200px;
  white-space: nowrap;
  overflow: hidden;
}
</style>
